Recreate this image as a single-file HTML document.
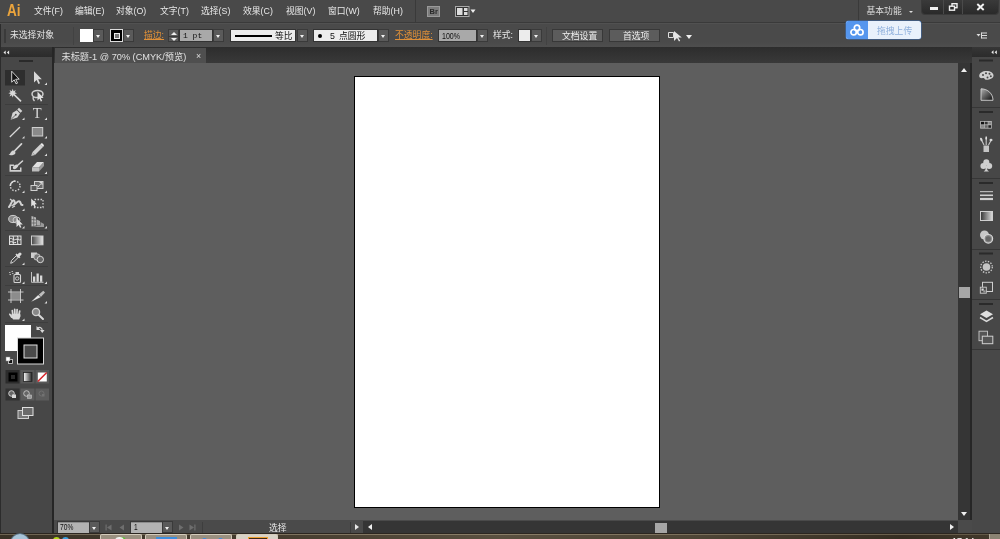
<!DOCTYPE html>
<html lang="zh-CN">
<head>
<meta charset="utf-8">
<title>Adobe Illustrator</title>
<style>
html,body{margin:0;padding:0;}
body{width:1000px;height:539px;overflow:hidden;position:relative;background:#5e5e5e;
 font-family:"Liberation Sans","Noto Sans CJK SC",sans-serif;font-size:10px;color:#e6e6e6;}
.abs,.abs *{position:absolute;}
#app div,#app span,#app svg{position:absolute;}
#app span{white-space:nowrap;line-height:12px;will-change:opacity;}
#app svg text{will-change:opacity;}
/* menu bar */
#menubar{left:0;top:0;width:1000px;height:23px;background:#494949;}
#menubar span.m{top:5px;font-size:8.8px;color:#e8e8e8;}
/* control bar */
#ctrl{left:0;top:22px;width:1000px;height:25px;background:linear-gradient(#3a3a3a 0,#3a3a3a 1px,#515151 1px,#515151 2px,#4a4a4a 2px,#4a4a4a 20px,#4e4e4e 25px);border-top:2px solid transparent;box-sizing:border-box;background-origin:border-box;}
.dd{width:11px;height:13px;background:#5a5a5a;border:1px solid #3a3a3a;box-sizing:border-box;}
.dd:after{content:"";position:absolute;left:2px;top:4.500px;border-left:2.500px solid transparent;border-right:2.500px solid transparent;border-top:3px solid #f0f0f0;}
.sp:after{display:none;}
.fld{background:#a9a9a9;border:1px solid #333;box-sizing:border-box;height:13px;color:#111;}
.wfld{background:#ededed;border:1px solid #333;box-sizing:border-box;height:13px;color:#111;}
.nar{transform:scaleX(0.800);transform-origin:0 50%;}
.sfld{background:#b2b2b2;box-shadow:0 0 0 1px #383838, inset 0 1px 0 #8c8c8c;color:#111;}
.org{color:#e09038;text-decoration:underline;}
.btn{height:13px;background:#5c5c5c;border:1px solid #383838;box-sizing:border-box;color:#f0f0f0;text-align:center;}
/* tabs */
#tabrow{left:53px;top:47px;width:919px;height:16px;background:linear-gradient(#2d2d2d,#393939);}
#tab{left:2px;top:0.500px;width:150.500px;height:15px;background:#4f4f4f;}
/* left tools */
#tools{left:0;top:47px;width:52px;height:486px;background:#474747;border-right:2px solid #262626;}
#toolhead{left:0;top:0;width:52px;height:10px;background:linear-gradient(#363636,#2b2b2b);}
/* canvas */
#canvas{left:54px;top:63px;width:904px;height:457px;background:#5e5e5e;}
#art{left:300px;top:13px;width:306px;height:432px;background:#fff;border:1px solid #000;box-sizing:border-box;}
/* vscroll */
#vs{left:958px;top:63px;width:12px;height:457px;background:#353535;}
#vline{left:970px;top:63px;width:2px;height:470px;background:#262626;}
/* right dock */
#dock{left:972px;top:47px;width:28px;height:486px;background:#484848;}
/* status bar */
#status{left:54px;top:520px;width:918px;height:13px;background:#4a4a4a;}
/* taskbar */
#task{left:0;top:533px;width:1000px;height:6px;overflow:hidden;background:linear-gradient(90deg,#3a3226 0%,#463d2f 28%,#5a5040 50%,#4e4536 70%,#362e22 90%,#443a2c 100%);}
.tb{top:1px;width:42px;height:8px;background:#9a9080;border:1px solid #d4ccbc;border-bottom:none;border-radius:2px 2px 0 0;box-sizing:border-box;}
</style>
</head>
<body>
<div id="app">

<!-- MENU BAR -->
<div id="menubar">
  <span style="left:6.500px;top:-0.500px;font-size:16.500px;line-height:20px;font-weight:bold;color:#eba43c;transform:scaleX(0.820);transform-origin:0 0;">Ai</span>
  <span class="m" style="left:34px;">文件(F)</span>
  <span class="m" style="left:75px;">编辑(E)</span>
  <span class="m" style="left:116px;">对象(O)</span>
  <span class="m" style="left:160px;">文字(T)</span>
  <span class="m" style="left:201px;">选择(S)</span>
  <span class="m" style="left:243px;">效果(C)</span>
  <span class="m" style="left:286px;">视图(V)</span>
  <span class="m" style="left:328px;">窗口(W)</span>
  <span class="m" style="left:373px;">帮助(H)</span>
  <div style="left:415px;top:0;width:1px;height:22px;background:#3a3a3a;"></div>
  <div style="left:427px;top:6px;width:13px;height:11px;background:#7c7c7c;border:1px solid #9a9a9a;box-sizing:border-box;"><span style="left:1.500px;top:0.500px;font-size:7.500px;line-height:8px;font-weight:bold;color:#2a2a2a;">Br</span></div>
  <svg style="left:455px;top:6px;" width="22" height="11" viewBox="0 0 22 11"><rect x="0.500" y="0.500" width="13.500" height="10" fill="#333" stroke="#aaa" stroke-width="1"/><rect x="2" y="2" width="5.500" height="7" fill="#ddd"/><rect x="9" y="2" width="3.500" height="3" fill="#ddd"/><rect x="9" y="6" width="3.500" height="3" fill="#ddd"/><path d="M15.500 3.500H20.500L18 7Z" fill="#eee"/></svg>
  <div style="left:858px;top:0;width:1px;height:22px;background:#3a3a3a;"></div>
  <span class="m" style="left:866.500px;top:4.500px;color:#dcdcdc;">基本功能</span>
  <div style="left:909px;top:11px;border-left:2px solid transparent;border-right:2px solid transparent;border-top:2.500px solid #ddd;"></div>
  <div id="winbtn" style="left:922px;top:0;width:76px;height:14px;background:linear-gradient(#3a3a3a,#2a2a2a);border-radius:0 0 3px 3px;box-shadow:0 0 0 1px #3a3a3a;">
    <div style="left:21px;top:0;width:1px;height:14px;background:#4a4a4a;"></div>
    <div style="left:40px;top:0;width:1px;height:14px;background:#4a4a4a;"></div>
    <div style="left:7.500px;top:7px;width:8px;height:2.500px;background:#f0f0f0;"></div>
    <svg style="left:26px;top:2px;" width="11" height="10" viewBox="0 0 11 10"><rect x="4" y="1.700" width="5" height="4" fill="none" stroke="#f0f0f0" stroke-width="1.400"/><rect x="1.500" y="4.200" width="5" height="4" fill="#2b2b2b" stroke="#f0f0f0" stroke-width="1.400"/></svg>
    <svg style="left:54px;top:3px;" width="9" height="8" viewBox="0 0 9 8"><path d="M1.300 1L7.700 7M7.700 1L1.300 7" stroke="#f4f4f4" stroke-width="1.900"/></svg>
  </div>
</div>

<!-- CONTROL BAR -->
<div id="ctrl">
  <div style="left:4px;top:5px;width:2px;height:14px;background:#3a3a3a;"></div>
  <span style="left:10px;top:5px;font-size:8.8px;color:#e4e4e4;">未选择对象</span>
  <div style="left:73px;top:3px;width:1px;height:18px;background:#424242;"></div>
  <div style="left:80px;top:5px;width:13px;height:13px;background:#fff;"></div>
  <div class="dd" style="left:93px;top:5px;"></div>
  <div style="left:110px;top:5px;width:13px;height:13px;background:#000;border:1px solid #ddd;box-sizing:border-box;"><div style="left:2.500px;top:2.500px;width:6px;height:6px;background:#777;border:1px solid #eee;box-sizing:border-box;"></div></div>
  <div class="dd" style="left:123px;top:5px;"></div>
  <span class="org" style="left:144px;top:5px;font-size:8.8px;">描边:</span>
  <div class="dd sp" style="left:168px;top:5px;"><div style="left:0;top:5.500px;width:9px;height:1px;background:#3a3a3a;"></div><div style="left:1.500px;top:1.500px;border-left:3px solid transparent;border-right:3px solid transparent;border-bottom:3px solid #eee;"></div><div style="left:1.500px;top:7.500px;border-left:3px solid transparent;border-right:3px solid transparent;border-top:3px solid #eee;"></div></div>
  <div class="fld" style="left:179px;top:5px;width:34px;"><span style="left:3px;top:0px;font-family:'Liberation Mono',monospace;font-size:8px;">1 pt</span></div>
  <div class="dd" style="left:213px;top:5px;"></div>
  <div class="wfld" style="left:230px;top:5px;width:66px;"><div style="left:4px;top:5px;width:37px;height:2px;background:#000;"></div><span style="left:44px;top:0px;font-size:8.8px;">等比</span></div>
  <div class="dd" style="left:297px;top:5px;"></div>
  <div class="wfld" style="left:313px;top:5px;width:65px;"><div style="left:4px;top:4px;width:4px;height:4px;border-radius:2px;background:#000;"></div><span style="left:16px;top:0px;font-size:8.8px;">5</span><span style="left:25px;top:0px;font-size:8.8px;">点圆形</span></div>
  <div class="dd" style="left:378px;top:5px;"></div>
  <span class="org" style="left:395px;top:5px;font-size:8.8px;">不透明度:</span>
  <div class="fld" style="left:438px;top:5px;width:39px;"><span class="nar" style="left:2.500px;top:0px;font-size:8.800px;">100%</span></div>
  <div class="dd" style="left:477px;top:5px;"></div>
  <span style="left:493px;top:5px;font-size:8.8px;color:#e4e4e4;">样式:</span>
  <div style="left:518px;top:5px;width:13px;height:13px;background:#ececec;border:1px solid #333;box-sizing:border-box;"></div>
  <div class="dd" style="left:531px;top:5px;"></div>
  <div style="left:546px;top:3px;width:1px;height:18px;background:#424242;"></div>
  <div class="btn" style="left:552px;top:5px;width:51px;"><span style="left:9px;top:0px;font-size:8.8px;">文档设置</span></div>
  <div class="btn" style="left:609px;top:5px;width:51px;"><span style="left:13px;top:0px;font-size:8.8px;">首选项</span></div>
  <svg style="left:668px;top:6px;" width="14" height="13" viewBox="0 0 14 13"><path d="M0.5 2.5h5v5h-5z" fill="none" stroke="#ddd" stroke-width="1"/><path d="M6 1v10l3-3 2 3.5 1.2-.7-2-3.3h3.6z" fill="#e6e6e6"/></svg>
  <div style="left:686px;top:11px;border-left:3px solid transparent;border-right:3px solid transparent;border-top:4px solid #eee;"></div>
</div>


<!-- UPLOAD WIDGET -->
<div id="upload" style="left:845.500px;top:21px;width:75.500px;height:18px;border-radius:2.500px;background:#e9f1fb;overflow:hidden;box-shadow:0 0 0 0.500px #3d6fb3;">
  <div style="left:0;top:0;width:22px;height:18px;background:#5596ee;"></div>
  <svg style="left:3px;top:2px;" width="16" height="14" viewBox="0 0 16 14"><g fill="none" stroke="#fff" stroke-width="1.700"><circle cx="8" cy="4.800" r="2.700"/><circle cx="4.600" cy="9.200" r="2.700"/><circle cx="11.400" cy="9.200" r="2.700"/></g></svg>
  <span style="left:31.500px;top:3.500px;font-size:8.800px;color:#8fb0dc;">拖拽上传</span>
</div>
<svg style="left:976px;top:32px;" width="12" height="7" viewBox="0 0 12 7"><path d="M0.500 2H4.500L2.500 4.500Z" fill="#ddd"/><path d="M5.500 1H11M5.500 3.500H11M5.500 6H11" stroke="#ddd" stroke-width="1"/><path d="M5 0.500H6V6.500H5Z" fill="#ddd"/></svg>

<!-- TAB ROW -->
<div id="tabrow">
  <div id="tab"><span style="left:6.500px;top:3px;font-size:9.200px;color:#e0e0e0;">未标题-1 @ 70% (CMYK/预览)</span><span style="left:141px;top:2.500px;font-size:8.8px;color:#ddd;">×</span></div>
</div>

<!-- LEFT TOOLS -->
<div id="tools">
  <div id="toolhead"></div>
  <svg style="left:0;top:0;" width="53" height="486" viewBox="0 47 53 486">
    <defs>
      <linearGradient id="gr1" x1="0" x2="1" y1="0" y2="0"><stop offset="0" stop-color="#444"/><stop offset="1" stop-color="#e8e8e8"/></linearGradient>
      <linearGradient id="gr2" x1="0" x2="1" y1="0" y2="0"><stop offset="0" stop-color="#fff"/><stop offset="1" stop-color="#222"/></linearGradient>
    </defs>
    <g fill="#ececec"><path d="M5.700 50.500V54.500L3.500 52.500Z"/><path d="M9.100 50.500V54.500L6.900 52.500Z"/></g>
    <rect x="19" y="60" width="14" height="2" fill="#2a2a2a"/>
    <!-- separators -->
    <g stroke="#3d3d3d" stroke-width="1">
      <path d="M5 104.5H48M5 175.5H48M5 230.5H48M5 266.5H48M5 285.5H48M5 322.5H48"/>
    </g>
    <!-- row 1 -->
    <rect x="5" y="70" width="20" height="15.5" fill="#2e2e2e"/>
    <path d="M11.7 71.2V82.2L14.2 79.8L16 83.8L17.5 83.1L15.7 79.2H19.2Z" fill="#111" stroke="#e0e0e0" stroke-width="0.9" stroke-linejoin="round"/>
    <path d="M34 71.3V82.5L36.6 80L38.4 84L40 83.2L38.2 79.3H41.8Z" fill="#d8d8d8"/>
    <g fill="#dcdcdc">
      <path d="M47 82.5V85H44.5Z"/>
      <path d="M24.5 117.5V120H22Z"/><path d="M47 117.5V120H44.5Z"/>
      <path d="M24.5 136V138.500H22Z"/><path d="M47 136V138.500H44.5Z"/>
      <path d="M47 153.500V156H44.5Z"/>
      <path d="M47 171.500V174H44.5Z"/>
      <path d="M24.5 190.500V193H22Z"/><path d="M47 190.500V193H44.5Z"/>
      <path d="M24.5 208.500V211H22Z"/>
      <path d="M24.5 226V228.500H22Z"/><path d="M47 226V228.500H44.5Z"/>
      <path d="M24.5 262.500V265H22Z"/>
      <path d="M24.5 281.500V284H22Z"/><path d="M47 281.500V284H44.5Z"/>
      <path d="M47 301V303.500H44.5Z"/>
      <path d="M24.500 318.500V321H22Z"/>
    </g>
    <!-- magic wand -->
    <path d="M12.7 88.800L13.600 91.200L15.800 90L14.700 92.300L17 93.200L14.700 94.100L15.800 96.400L13.500 95.300L12.700 97.600L11.800 95.300L9.500 96.400L10.600 94.100L8.400 93.200L10.600 92.300L9.500 90L11.800 91.200Z" fill="#d8d8d8"/>
    <path d="M14.500 95L21 101.300" stroke="#d8d8d8" stroke-width="1.700"/>
    <!-- lasso -->
    <ellipse cx="37.500" cy="94" rx="5.500" ry="3.600" fill="none" stroke="#d0d0d0" stroke-width="1.500"/>
    <path d="M33.500 96.500C32.500 98.500 33.500 100 34.500 101" stroke="#d0d0d0" stroke-width="1.300" fill="none"/>
    <path d="M37.500 91.500V100.500L39.500 98.500L40.800 101.500L42.200 100.900L40.900 98H43.600Z" fill="#e0e0e0"/>
    <!-- pen -->
    <path d="M10.700 119.800L12.600 112.800L16.800 110.200L20 113.400L17.400 117.600Z" fill="#d4d4d4"/>
    <path d="M17.300 109.500L19 107.800L22.300 111.100L20.600 112.800Z" fill="#d4d4d4"/>
    <path d="M11 119.500L15.500 115" stroke="#4a4a4a" stroke-width="0.800"/>
    <circle cx="15.800" cy="114.700" r="0.900" fill="#4a4a4a"/>
    <!-- T -->
    <text x="37.300" y="118.300" font-family="Liberation Serif, serif" font-size="14.500" fill="#d8d8d8" text-anchor="middle">T</text>
    <!-- line -->
    <path d="M9.800 137L20 127" stroke="#d8d8d8" stroke-width="1.200"/>
    <!-- rect -->
    <rect x="32.300" y="127.500" width="10.400" height="8.500" fill="#8a8a8a" stroke="#d0d0d0" stroke-width="1"/>
    <!-- brush -->
    <path d="M21.500 143.800L14.500 151" stroke="#d4d4d4" stroke-width="1.700" stroke-linecap="round"/>
    <path d="M8.500 154.800C10.500 154.600 10.500 151.300 13 150.600C14.500 150.700 15.600 151.800 15.400 153.200C14.500 155.300 10.500 155.800 8.500 154.800Z" fill="#d4d4d4"/>
    <!-- pencil -->
    <path d="M40.300 144.300L43 147L35 155L32.300 152.300Z" fill="#d0d0d0"/>
    <path d="M32.300 152.300L35 155L31.200 156Z" fill="#c0c0c0"/>
    <path d="M40.300 144.300L41.300 143.300C42.300 142.700 44.300 144.700 43.900 146L43 147Z" fill="#e8e8e8"/>
    <!-- blob brush -->
    <path d="M9.500 164.500H14V166H11V170H20V167.500H21.500V171.800H9.500Z" fill="#d0d0d0"/>
    <path d="M22.500 161L18 165" stroke="#d4d4d4" stroke-width="1.600" stroke-linecap="round"/>
    <ellipse cx="15.500" cy="166.800" rx="3" ry="1.800" transform="rotate(-35 15.500 166.800)" fill="#d4d4d4"/>
    <!-- eraser -->
    <path d="M32 167.500L37 162H44L39 167.500Z" fill="#e0e0e0"/>
    <path d="M32 167.500H39V171.500H32Z" fill="#bdbdbd"/>
    <path d="M39 167.500L44 162V166L39 171.500Z" fill="#999"/>
    <!-- rotate -->
    <circle cx="15.200" cy="186" r="4.800" fill="none" stroke="#d0d0d0" stroke-width="1.400" stroke-dasharray="1.500 1.500"/>
    <path d="M10.300 186A4.900 4.900 0 0 1 15.200 181.100" fill="none" stroke="#d8d8d8" stroke-width="1.500"/>
    <!-- scale -->
    <rect x="34.500" y="181.500" width="8.500" height="7" fill="#6a6a6a" stroke="#d0d0d0" stroke-width="1"/>
    <rect x="31" y="185.500" width="6" height="5" fill="#5a5a5a" stroke="#d0d0d0" stroke-width="1"/>
    <path d="M38 187L42 182.500M42 182.500H39.500M42 182.500V185" stroke="#e0e0e0" stroke-width="0.900" fill="none"/>
    <!-- warp -->
    <path d="M9 207C11 205 11 202 13 200.500C14.500 199.500 15.500 203 14 204.500C16 204 17.500 200.500 19.500 201.500C21.500 202.500 20 205.500 22.500 205" fill="none" stroke="#d4d4d4" stroke-width="2" stroke-linecap="round"/>
    <path d="M10 199L12.500 201M12 207.500L15 206" stroke="#d4d4d4" stroke-width="1.300"/>
    <!-- free transform -->
    <rect x="34.500" y="199.500" width="8.500" height="8" fill="none" stroke="#d0d0d0" stroke-width="1.300" stroke-dasharray="1.600 1.400"/>
    <path d="M31.200 198.500V206.500L33.200 204.800L34.500 207.500L35.800 207L34.500 204.200H37Z" fill="#e0e0e0"/>
    <!-- shape builder -->
    <ellipse cx="13" cy="219" rx="4.300" ry="3.600" fill="#888" stroke="#d0d0d0" stroke-width="1"/>
    <ellipse cx="16.500" cy="220" rx="3.500" ry="3" fill="none" stroke="#d0d0d0" stroke-width="0.900"/>
    <path d="M16.500 218V227L18.700 225L20 227.800L21.400 227.200L20.100 224.400H22.800Z" fill="#e0e0e0"/>
    <!-- perspective grid -->
    <path d="M31.500 216V226.500L36 225.500V217.500Z" fill="#bbb"/>
    <path d="M36.500 219.500V225.500H40V221Z" fill="#aaa"/>
    <path d="M31.500 227H44V224L40.500 222V225.500" fill="#999"/>
    <path d="M33.700 216.500V226M31.500 219.500L36 220M31.500 223L36 223" stroke="#4a4a4a" stroke-width="0.600"/>
    <!-- mesh -->
    <rect x="9.500" y="236" width="11.500" height="8.500" fill="#555" stroke="#e0e0e0" stroke-width="1"/>
    <path d="M9.500 239C12 237 13 241 15.500 239.500C18 238 19 241 21 239.500M13 236C14.500 238.500 12 241 13.500 244.500M17.500 236C19 238.500 16.500 241.500 18 244.500M9.500 242C12 240.500 13.500 243.500 16 242.500" fill="none" stroke="#e8e8e8" stroke-width="1"/>
    <!-- gradient -->
    <rect x="31.500" y="236" width="11.500" height="8.800" fill="url(#gr1)" stroke="#d0d0d0" stroke-width="1"/>
    <!-- eyedropper -->
    <path d="M10.700 263.300L11.500 260.500L16.500 255.500L18.300 257.300L13.300 262.300Z" fill="none" stroke="#d4d4d4" stroke-width="1"/>
    <path d="M16 254L19.800 257.800" stroke="#d8d8d8" stroke-width="1.600"/>
    <path d="M18 256L20 254" stroke="#d8d8d8" stroke-width="3" stroke-linecap="round"/>
    <!-- blend -->
    <rect x="31" y="252.500" width="6" height="5.500" fill="#d0d0d0"/>
    <circle cx="37" cy="257" r="3.200" fill="#777" stroke="#c8c8c8" stroke-width="0.900"/>
    <circle cx="40.300" cy="259.500" r="3.200" fill="#666" stroke="#d8d8d8" stroke-width="1"/>
    <!-- symbol sprayer -->
    <rect x="14" y="274.500" width="6.500" height="8" rx="1" fill="none" stroke="#d4d4d4" stroke-width="1.100"/>
    <rect x="15.500" y="272" width="3.500" height="2" fill="#d4d4d4"/>
    <circle cx="17.200" cy="278.500" r="1.700" fill="none" stroke="#d4d4d4" stroke-width="0.900"/>
    <path d="M9 272.500H10.500M11.500 271.500H13M9.500 274.500H11M12 273.500H13.500" stroke="#c0c0c0" stroke-width="0.900"/>
    <!-- graph -->
    <path d="M31.500 272V282.300H43.500" fill="none" stroke="#d0d0d0" stroke-width="0.900"/>
    <rect x="33" y="276.500" width="2.300" height="5.300" fill="#d8d8d8"/>
    <rect x="36.500" y="273.500" width="2.300" height="8.300" fill="#d8d8d8"/>
    <rect x="40" y="275.500" width="2.300" height="6.300" fill="#d8d8d8"/>
    <!-- artboard -->
    <rect x="11.500" y="292.500" width="8.500" height="7" fill="#8c8c8c"/>
    <path d="M8 292H23.500M8 300H23.500M11 289V303M20.500 289V303" stroke="#d4d4d4" stroke-width="0.900"/>
    <!-- slice -->
    <path d="M31.200 301.700L38.200 295L40.500 297.300Z" fill="#e4e4e4"/>
    <path d="M38.800 294.400L43.300 290.700L45 292.400L40.900 296.900Z" fill="#bcbcbc"/>
    <!-- hand -->
    <g stroke="#d8d8d8" stroke-width="1.700" stroke-linecap="round" fill="none"><path d="M12.900 315L12.300 310.700M14.900 314L14.700 309.300M16.900 314L17.100 309.500M18.900 315L19.700 311M11.800 317.200L9.800 314.300"/></g>
    <path d="M11.600 313.800H20.300L20.600 316L19.200 319.600H13.200L11 316.500Z" fill="#d8d8d8"/>
    <!-- zoom -->
    <circle cx="36" cy="312" r="3.600" fill="#888" stroke="#d0d0d0" stroke-width="1.300"/>
    <path d="M38.800 315L43 319" stroke="#d8d8d8" stroke-width="2" stroke-linecap="round"/>
    <!-- fill / stroke -->
    <rect x="5" y="325" width="26" height="26" fill="#fff"/>
    <rect x="17.500" y="338" width="26" height="26" fill="#000" stroke="#d8d8d8" stroke-width="1"/>
    <rect x="24" y="345" width="13" height="13" fill="#4a4a4a" stroke="#e0e0e0" stroke-width="1"/>
    <path d="M37.500 328.500C39.500 326.500 42 327.500 42.300 330.500" fill="none" stroke="#d0d0d0" stroke-width="1.200"/>
    <path d="M36.500 326V330H40.500Z" fill="#d8d8d8"/><path d="M40 330H44.500L42.300 333Z" fill="#d8d8d8"/>
    <rect x="8.500" y="359.500" width="4" height="4" fill="#111" stroke="#ddd" stroke-width="0.800"/>
    <rect x="6" y="357" width="4" height="4" fill="#fff" stroke="#888" stroke-width="0.500"/>
    <!-- colour mode row -->
    <rect x="5.500" y="370" width="14" height="13.500" fill="#2c2c2c"/>
    <rect x="8.500" y="372.500" width="9" height="9" fill="#000"/><rect x="11" y="375" width="4" height="4" fill="#2a2a2a"/>
    <rect x="20.500" y="370" width="14" height="13.500" fill="#585858"/>
    <rect x="23.500" y="372.500" width="8.500" height="9" fill="url(#gr2)" stroke="#222" stroke-width="0.800"/>
    <rect x="35.500" y="370" width="13.500" height="13.500" fill="#585858"/>
    <rect x="37.800" y="372.500" width="9" height="9" fill="#fff"/>
    <path d="M37.800 381.500L46.800 372.500" stroke="#d8242a" stroke-width="1.500"/>
    <!-- draw mode row -->
    <rect x="5.500" y="388.500" width="14" height="12" fill="#333"/>
    <rect x="20.500" y="388.500" width="14" height="12" fill="#5c5c5c"/>
    <rect x="35.500" y="388.500" width="13.500" height="12" fill="#5c5c5c"/>
    <circle cx="11.500" cy="393.500" r="2.800" fill="#666" stroke="#d8d8d8" stroke-width="0.900"/><rect x="12" y="394.500" width="4" height="3.500" fill="#d8d8d8"/>
    <circle cx="26.500" cy="393.500" r="2.800" fill="#666" stroke="#c8c8c8" stroke-width="0.900"/><rect x="27.500" y="395" width="4" height="3.300" fill="#999" stroke="#c8c8c8" stroke-width="0.600"/>
    <circle cx="41.500" cy="393.500" r="2.500" fill="none" stroke="#727272" stroke-width="0.900"/><rect x="42" y="394" width="2.500" height="2.500" fill="#727272"/>
    <!-- screen mode -->
    <rect x="18" y="410.500" width="10.500" height="8" fill="#777" stroke="#d0d0d0" stroke-width="1"/>
    <rect x="22.500" y="407.500" width="10.500" height="8" fill="#6a6a6a" stroke="#e0e0e0" stroke-width="1"/>
  </svg>
</div>

<!-- CANVAS -->
<div id="canvas">
  <div id="art"></div>
</div>
<div id="vs">
  <div style="left:3px;top:5px;border-left:3.5px solid transparent;border-right:3.5px solid transparent;border-bottom:4.500px solid #f0f0f0;"></div>
  <div style="left:1px;top:223.500px;width:11px;height:11px;background:#a6a6a6;"></div>
  <div style="left:3px;top:449px;border-left:3.5px solid transparent;border-right:3.5px solid transparent;border-top:4.500px solid #f0f0f0;"></div>
</div>

<div id="vline"></div>

<!-- RIGHT DOCK -->
<div id="dock">
  <div style="left:0;top:0;width:28px;height:10px;background:linear-gradient(#363636,#2b2b2b);"></div>
  <svg style="left:0;top:0;" width="28" height="486" viewBox="972 47 28 486">
    <defs>
      <linearGradient id="dg1" x1="0" x2="1" y1="0" y2="0"><stop offset="0" stop-color="#333"/><stop offset="1" stop-color="#ddd"/></linearGradient>
      <linearGradient id="dg2" x1="0" x2="1" y1="0" y2="1"><stop offset="0" stop-color="#b0b0b0"/><stop offset="0.800" stop-color="#2a2a2a"/></linearGradient>
    </defs>
    <g fill="#ececec"><path d="M993.500 50.300V54.300L991.300 52.300Z"/><path d="M996.800 50.300V54.300L994.600 52.300Z"/></g>
    <rect x="972" y="57" width="28" height="293" fill="#474747"/>
    <g fill="#2a2a2a">
      <rect x="979" y="59.500" width="14" height="2"/><rect x="979" y="111" width="14" height="2"/><rect x="979" y="182" width="14" height="2"/><rect x="979" y="252.500" width="14" height="2"/><rect x="979" y="303" width="14" height="2"/>
    </g>
    <path d="M972 107.500H1000M972 178.500H1000M972 249.500H1000M972 299.500H1000M972 349.500H1000" stroke="#363636" stroke-width="1"/>
    <!-- color palette -->
    <path d="M979.200 76C979.200 73 982.500 71 986.500 71C990.500 71 993.500 73 993.500 75.500C993.500 78 990.500 79.800 986 79.800C984.500 79.800 984.800 78 983.500 78C982 78.300 979.200 78.500 979.200 76Z" fill="#d0d0d0"/>
    <g fill="#474747"><circle cx="983" cy="75" r="1"/><circle cx="986" cy="73.300" r="1"/><circle cx="989.500" cy="73.800" r="1"/><circle cx="990.800" cy="76.300" r="1"/><circle cx="987.500" cy="77.500" r="1"/></g>
    <!-- color guide -->
    <path d="M981 88.800V100.300H993C993 94 988 88.800 981 88.800Z" fill="url(#dg2)" stroke="#d0d0d0" stroke-width="0.900"/>
    <!-- swatches -->
    <rect x="980.200" y="121" width="11.600" height="7.600" fill="#bbb"/>
    <g><rect x="981" y="121.800" width="3" height="2.600" fill="#111"/><rect x="984.700" y="121.800" width="3" height="2.600" fill="#333"/><rect x="988.300" y="121.800" width="2.800" height="2.600" fill="#888"/><rect x="981" y="125.200" width="3" height="2.600" fill="#888"/><rect x="984.700" y="125.200" width="3" height="2.600" fill="#666"/><rect x="988.300" y="125.200" width="2.800" height="2.600" fill="#222"/></g>
    <!-- brushes -->
    <rect x="983.500" y="145.500" width="5.500" height="6.500" fill="#c4c4c4"/>
    <path d="M984 145L981.500 140M986.200 145V138M988.500 145L991 140.500" stroke="#c8c8c8" stroke-width="1.100"/>
    <ellipse cx="981.300" cy="139.500" rx="1.100" ry="1.800" fill="#d8d8d8" transform="rotate(-25 981.300 139.500)"/>
    <ellipse cx="986.200" cy="138" rx="0.900" ry="1.800" fill="#e0e0e0"/>
    <ellipse cx="991" cy="140" rx="1.500" ry="1.300" fill="#d8d8d8"/>
    <!-- symbols (club) -->
    <g fill="#cfcfcf"><circle cx="986.300" cy="162.200" r="3"/><circle cx="983.400" cy="166" r="3"/><circle cx="989.200" cy="166" r="3"/><path d="M985.700 166H986.900L987.300 170L989 171.500H983.600L985.300 170Z"/></g>
    <!-- stroke -->
    <path d="M980 191.700H993" stroke="#d0d0d0" stroke-width="1"/><path d="M980 195.300H993" stroke="#d0d0d0" stroke-width="1.600"/><path d="M980 199H993" stroke="#d0d0d0" stroke-width="2.200"/>
    <!-- gradient -->
    <rect x="980.500" y="211.500" width="12" height="9" fill="url(#dg1)" stroke="#d0d0d0" stroke-width="1"/>
    <!-- transparency -->
    <circle cx="984.500" cy="235" r="4.500" fill="#c8c8c8"/>
    <circle cx="988.300" cy="238.800" r="4.300" fill="#8a8a8a" stroke="#d8d8d8" stroke-width="1.200"/>
    <circle cx="988.300" cy="238.800" r="2.600" fill="#666"/>
    <!-- appearance -->
    <circle cx="986.500" cy="267" r="5.800" fill="none" stroke="#c8c8c8" stroke-width="1.300" stroke-dasharray="1.400 1.400"/>
    <circle cx="986.500" cy="267" r="3.800" fill="#c4c4c4"/>
    <!-- graphic styles -->
    <rect x="982.500" y="282.300" width="10" height="9.200" fill="none" stroke="#cfcfcf" stroke-width="1"/>
    <rect x="980.300" y="287.200" width="6" height="6" fill="#474747" stroke="#cfcfcf" stroke-width="0.900"/>
    <rect x="981.500" y="288.500" width="2.200" height="2.200" fill="#ddd"/><rect x="983.300" y="290.300" width="2.200" height="2.200" fill="#999"/>
    <!-- layers -->
    <path d="M986.500 310.500L993 314.200L986.500 318L980 314.200Z" fill="#e0e0e0"/>
    <path d="M980 317.500L986.500 321.300L993 317.500" fill="none" stroke="#d8d8d8" stroke-width="1.500"/>
    <!-- artboards -->
    <rect x="979" y="331.200" width="8.500" height="9.500" fill="#555" stroke="#c8c8c8" stroke-width="0.900"/>
    <rect x="982.300" y="336.200" width="10.500" height="7.500" fill="#555" stroke="#d0d0d0" stroke-width="1"/>
  </svg>
</div>

<!-- STATUS BAR -->
<div id="status">
  <div class="sfld" style="left:4px;top:1.500px;width:30.500px;height:11px;"><span class="nar" style="left:2px;top:0px;font-size:8.300px;line-height:11px;">70%</span></div>
  <div class="dd" style="left:35px;top:1px;height:12px;"></div>
  <svg style="left:48px;top:2px;" width="100" height="11" viewBox="0 0 100 11">
    <g fill="#6e6e6e"><rect x="3.500" y="2.500" width="1.200" height="6"/><path d="M9.500 2.500V8.500L5 5.500Z"/><path d="M22 2.500V8.500L17.500 5.500Z"/>
    <path d="M77 2.500V8.500L81.500 5.500Z"/><path d="M87.500 2.500V8.500L92 5.500Z"/><rect x="92.300" y="2.500" width="1.200" height="6"/></g>
  </svg>
  <div class="sfld" style="left:77px;top:1.500px;width:30.500px;height:11px;"><span class="nar" style="left:2.500px;top:0px;font-size:8.300px;line-height:11px;">1</span></div>
  <div class="dd" style="left:108px;top:1px;height:12px;"></div>
  <div style="left:148px;top:2px;width:1px;height:11px;background:#3e3e3e;"></div>
  <span style="left:215px;top:2px;font-size:8.800px;color:#e6e6e6;">选择</span>
  <div style="left:296px;top:2px;width:1px;height:11px;background:#3a3a3a;"></div>
  <div style="left:301px;top:3.500px;border-top:3.500px solid transparent;border-bottom:3.500px solid transparent;border-left:4.500px solid #e6e6e6;"></div>
  <div style="left:309px;top:1px;width:595px;height:12px;background:#353535;">
    <div style="left:5px;top:2.500px;border-top:3.500px solid transparent;border-bottom:3.500px solid transparent;border-right:4.500px solid #f0f0f0;"></div>
    <div style="left:292px;top:2px;width:12px;height:11px;background:#a6a6a6;"></div>
    <div style="left:586.500px;top:2.500px;border-top:3.500px solid transparent;border-bottom:3.500px solid transparent;border-left:4.500px solid #f0f0f0;"></div>
  </div>
</div>

<div style="left:0;top:24px;width:1px;height:509px;background:#2c2c2c;"></div>

<!-- TASKBAR -->
<div id="task">
  <div style="left:0;top:0;width:1000px;height:1px;background:#2c2620;"></div><div style="left:0;top:1px;width:1000px;height:1px;background:linear-gradient(90deg,#6e6452,#8a7e68 50%,#625846);"></div>
  <div style="left:11px;top:1px;width:18px;height:18px;border-radius:9px;background:#a8c4d8;box-shadow:0 0 0 1px #5a7080;"></div>
  <div style="left:53px;top:4px;width:7px;height:7px;border-radius:4px;background:#b4d818;"></div>
  <div style="left:62px;top:4px;width:7px;height:7px;border-radius:4px;background:#3aa0e0;"></div>
  <div class="tb" style="left:100px;"><div style="left:14px;top:2px;width:9px;height:6px;border-radius:4px 4px 0 0;background:#f0f0f0;box-shadow:2px 0 0 #58c030;"></div></div>
  <div class="tb" style="left:145px;"><div style="left:10px;top:1.500px;width:21px;height:6px;background:#3c8ee0;"></div></div>
  <div class="tb" style="left:190px;"><div style="left:11px;top:3px;width:5px;height:5px;border-radius:3px;background:#3a8ae0;"></div><div style="left:27px;top:3px;width:5px;height:5px;border-radius:3px;background:#3a8ae0;"></div></div>
  <div class="tb" style="left:236px;background:#d8d2c6;"><div style="left:11px;top:2px;width:20px;height:6px;background:#3a2a18;border:1px solid #f0a030;border-bottom:none;box-sizing:border-box;"></div></div>
  <span style="left:952px;top:3px;font-size:9px;line-height:10px;color:#fff;">17:14</span>
  <div style="left:989px;top:1px;width:11px;height:6px;background:#8a8272;border-left:1px solid #b0a898;"></div>
</div>

</div>
</body>
</html>
